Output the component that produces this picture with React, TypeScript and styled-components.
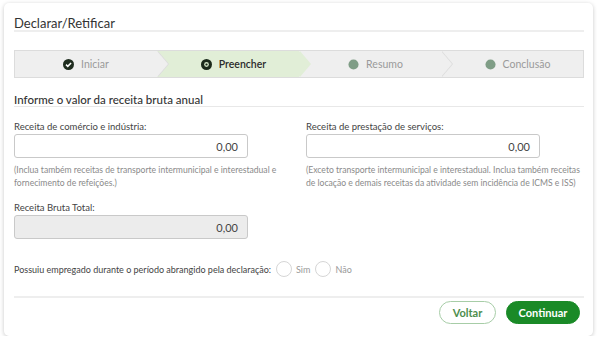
import React from "react";
import styled, { createGlobalStyle, css } from "styled-components";

const Global = createGlobalStyle`
  html, body { margin: 0; padding: 0; background: #ffffff; }
  body { font-family: Lato, "Open Sans", sans-serif; color: #333; }
  * { box-sizing: border-box; }
`;

const Card = styled.div`
  margin: 3px 7px 0 4px;
  height: 333px;
  background: #fff;
  border-radius: 5px;
  box-shadow: 0 1px 4px rgba(0, 0, 0, 0.22);
  padding: 0 9px 0 10px;
  display: flex;
  flex-direction: column;
`;

const Title = styled.h1`
  margin: 0;
  padding-top: 14px;
  font-size: 13px;
  font-weight: 400;
  color: #333;
  line-height: 13px;
  border-bottom: 2px solid #eeeeee;
`;

const Stepper = styled.div`
  margin-top: 18px;
  height: 28px;
  display: flex;
  border: 1px solid #dcdcdc;
  background: #efefef;
`;

const Step = styled.div<{ $active?: boolean; $z: number; $arrow: boolean; $first?: boolean }>`
  flex: none;
  width: 25%;
  position: relative;
  z-index: ${(p) => p.$z};
  display: flex;
  align-items: center;
  justify-content: center;
  gap: 7px;
  padding-left: ${(p) => (p.$first ? "0" : "11px")};
  font-size: 10.5px;
  color: ${(p) => (p.$active ? "#2a2a2a" : "#9a9a9a")};
  font-weight: ${(p) => (p.$active ? 600 : 400)};
  background: ${(p) => (p.$active ? "#e1eed7" : "#efefef")};
  ${(p) =>
    p.$arrow &&
    css`
      &::before,
      &::after {
        content: "";
        position: absolute;
        top: 0;
        bottom: 0;
        width: 11px;
        clip-path: polygon(0 0, 100% 50%, 0 100%);
      }
      &::before {
        right: -12px;
        background: ${p.$active ? "#e1eed7" : "#dcdcdc"};
      }
      &::after {
        right: -11px;
        background: ${p.$active ? "#e1eed7" : "#efefef"};
      }
    `}
`;

const SectionTitle = styled.h2`
  margin: 15px 0 0;
  font-size: 11.5px;
  font-weight: 500;
  line-height: 13px;
  color: #333;
  border-bottom: 1px solid #e8e8e8;
`;

const Grid = styled.div`
  display: grid;
  grid-template-columns: 278px 278px;
  column-gap: 14px;
  margin-top: 14px;
`;

const Field = styled.div`
  display: flex;
  flex-direction: column;
`;

const Label = styled.label`
  font-size: 9.5px;
  line-height: 12px;
  color: #444;
  margin-bottom: 1px;
`;

const Input = styled.div<{ $disabled?: boolean }>`
  width: 234px;
  height: 24px;
  border: 1px solid #c9c9c9;
  border-radius: 3px;
  background: ${(p) => (p.$disabled ? "#ececec" : "#fff")};
  display: flex;
  align-items: center;
  justify-content: flex-end;
  padding-right: 9px;
  font-size: 11px;
  color: #444;
`;

const Help = styled.p`
  margin: 6px 0 0;
  font-size: 8.6px;
  line-height: 13px;
  color: #8a8a8a;
`;

const TotalField = styled(Field)`
  margin-top: 12px;
`;

const RadioRow = styled.div`
  margin-top: 22px;
  display: flex;
  align-items: center;
  font-size: 9px;
  color: #444;
`;

const RadioOption = styled.label`
  display: flex;
  align-items: center;
  margin-left: 5px;
  color: #999;
  gap: 4px;
`;

const RadioCircle = styled.span`
  width: 16px;
  height: 16px;
  border-radius: 50%;
  border: 1px solid #d6d6d6;
  background: #fff;
  display: inline-block;
`;

const Footer = styled.div`
  margin-top: 19px;
  border-top: 2px solid #eeeeee;
  display: flex;
  justify-content: flex-end;
  gap: 10px;
  padding-top: 3px;
  padding-right: 4px;
`;

const Button = styled.button<{ $primary?: boolean }>`
  height: 23px;
  border-radius: 12px;
  font-family: inherit;
  font-size: 11px;
  font-weight: 700;
  padding: 0;
  cursor: pointer;
  ${(p) =>
    p.$primary
      ? css`
          width: 74px;
          background: #1a8a27;
          border: 1px solid #1a8a27;
          color: #fff;
        `
      : css`
          width: 57px;
          background: #fff;
          border: 1px solid #a7cda7;
          color: #4d8d4d;
        `}
`;

const CheckIcon = () => (
  <svg width="11" height="11" viewBox="0 0 12 12">
    <circle cx="6" cy="6" r="6" fill="#1f2d1f" />
    <path d="M3.3 6.2 L5.2 8 L8.8 4.3" stroke="#fff" strokeWidth="1.7" fill="none" />
  </svg>
);

const DotIcon = () => (
  <svg width="11" height="11" viewBox="0 0 12 12">
    <circle cx="6" cy="6" r="6" fill="#1b2a1b" />
    <circle cx="6" cy="6" r="2.6" fill="#cfe0c4" />
    <circle cx="6" cy="6" r="1.2" fill="#1b2a1b" />
  </svg>
);

const PendingIcon = () => (
  <svg width="11" height="11" viewBox="0 0 12 12">
    <circle cx="6" cy="6" r="5.5" fill="#7f9d86" />
  </svg>
);

export default function App() {
  return (
    <>
      <Global />
      <Card>
        <Title>Declarar/Retificar</Title>
        <Stepper>
          <Step $z={4} $arrow $first>
            <CheckIcon />
            Iniciar
          </Step>
          <Step $z={3} $arrow $active>
            <DotIcon />
            Preencher
          </Step>
          <Step $z={2} $arrow>
            <PendingIcon />
            Resumo
          </Step>
          <Step $z={1} $arrow={false}>
            <PendingIcon />
            Conclusão
          </Step>
        </Stepper>
        <SectionTitle>Informe o valor da receita bruta anual</SectionTitle>
        <Grid>
          <Field>
            <Label>Receita de comércio e indústria:</Label>
            <Input>0,00</Input>
            <Help>
              (Inclua também receitas de transporte intermunicipal e interestadual e
              fornecimento de refeições.)
            </Help>
          </Field>
          <Field>
            <Label>Receita de prestação de serviços:</Label>
            <Input>0,00</Input>
            <Help>
              (Exceto transporte intermunicipal e interestadual. Inclua também receitas
              de locação e demais receitas da atividade sem incidência de ICMS e ISS)
            </Help>
          </Field>
        </Grid>
        <TotalField>
          <Label>Receita Bruta Total:</Label>
          <Input $disabled>0,00</Input>
        </TotalField>
        <RadioRow>
          Possuiu empregado durante o período abrangido pela declaração:
          <RadioOption>
            <RadioCircle />
            Sim
          </RadioOption>
          <RadioOption>
            <RadioCircle />
            Não
          </RadioOption>
        </RadioRow>
        <Footer>
          <Button>Voltar</Button>
          <Button $primary>Continuar</Button>
        </Footer>
      </Card>
    </>
  );
}
